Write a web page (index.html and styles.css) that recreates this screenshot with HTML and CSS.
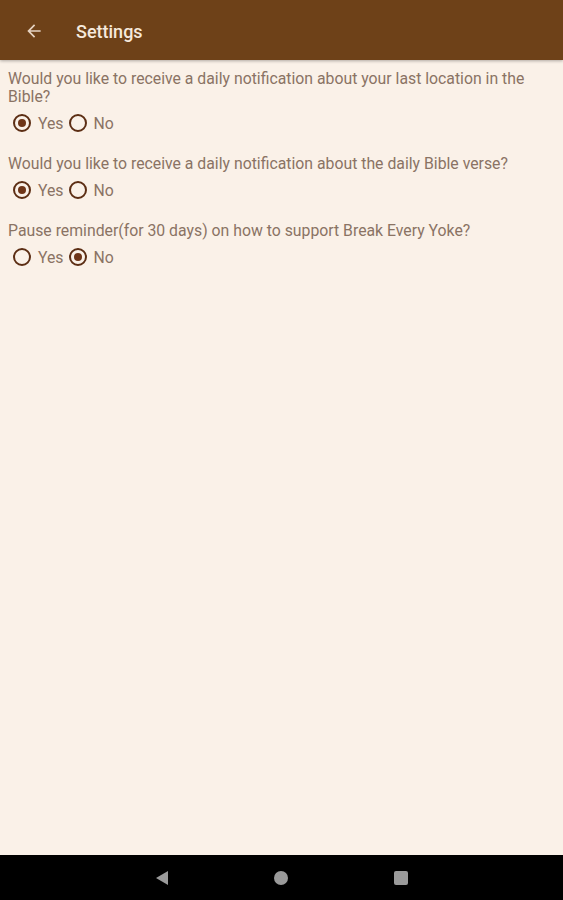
FILE: index.html
```html
<!DOCTYPE html>
<html lang="en">
<head>
    <meta charset="UTF-8">
    <meta name="viewport" content="width=device-width, initial-scale=1.0">
    <title>Settings</title>
    <link rel="stylesheet" href="styles.css">
</head>
<body>
    <div class="screen">
        <header class="toolbar">
            <span class="back">
                <svg width="24" height="24" viewBox="0 0 24 24"><path d="M20 11H7.83l5.59-5.59L12 4l-8 8 8 8 1.41-1.41L7.83 13H20v-2z" fill="currentColor"/></svg>
            </span>
            <h1>Settings</h1>
        </header>
        <main class="content">
            <div class="question">
                <p>Would you like to receive a daily notification about your last location in the Bible?</p>
                <div class="options">
                    <label class="radio checked"><span class="dot"></span>Yes</label>
                    <label class="radio"><span class="dot"></span>No</label>
                </div>
            </div>
            <div class="question">
                <p>Would you like to receive a daily notification about the daily Bible verse?</p>
                <div class="options">
                    <label class="radio checked"><span class="dot"></span>Yes</label>
                    <label class="radio"><span class="dot"></span>No</label>
                </div>
            </div>
            <div class="question">
                <p>Pause reminder(for 30 days) on how to support Break Every Yoke?</p>
                <div class="options">
                    <label class="radio"><span class="dot"></span>Yes</label>
                    <label class="radio checked"><span class="dot"></span>No</label>
                </div>
            </div>
        </main>
        <nav class="navbar">
            <span class="nav-back"></span>
            <span class="nav-home"></span>
            <span class="nav-recent"></span>
        </nav>
    </div>
</body>
</html>
```

FILE: styles.css
```css
body {
    margin: 0;
    font-family: Roboto, "Liberation Sans", sans-serif;
    background-color: #faf1e8;
}
.screen {
    height: 900px;
    display: flex;
    flex-direction: column;
}
.toolbar {
    height: 60px;
    flex-shrink: 0;
    background: #6e4118;
    color: #f6e9dc;
    display: flex;
    align-items: center;
    box-shadow: 0 1px 3px rgba(0, 0, 0, 0.3);
}
.back {
    width: 24px;
    height: 24px;
    margin: 2px 0 0 22px;
    color: #e6d3c2;
}
.back svg {
    display: block;
    width: 20px;
    height: 20px;
    margin: 2px;
}
.toolbar h1 {
    margin: 2px 0 0 30px;
    font-size: 18px;
    font-weight: 500;
}
.content {
    flex: 1;
    padding: 10px 8px;
}
.question {
    margin-bottom: 15px;
}
.question p {
    margin: 0;
    font-size: 15.8px;
    line-height: 18px;
    color: #8a7364;
}
.options {
    display: flex;
    height: 34px;
    align-items: center;
    padding-left: 5px;
    gap: 5px;
}
.radio {
    display: flex;
    align-items: center;
    font-size: 15.8px;
    color: #8a7364;
}
.dot {
    width: 14px;
    height: 14px;
    border: 2px solid #5c2e14;
    border-radius: 50%;
    margin-right: 7px;
    box-sizing: content-box;
    position: relative;
}
.checked .dot::after {
    content: "";
    position: absolute;
    left: 3px;
    top: 3px;
    width: 8px;
    height: 8px;
    border-radius: 50%;
    background: #6e3518;
}
.navbar {
    height: 45px;
    flex-shrink: 0;
    background: #000;
    display: flex;
    align-items: center;
    justify-content: center;
    gap: 106px;
}
.nav-back {
    width: 0;
    height: 0;
    border-top: 7px solid transparent;
    border-bottom: 7px solid transparent;
    border-right: 12px solid #9a9a9a;
}
.nav-home {
    width: 14px;
    height: 14px;
    border-radius: 50%;
    background: #9a9a9a;
}
.nav-recent {
    width: 14px;
    height: 14px;
    border-radius: 2px;
    background: #9a9a9a;
}
```
